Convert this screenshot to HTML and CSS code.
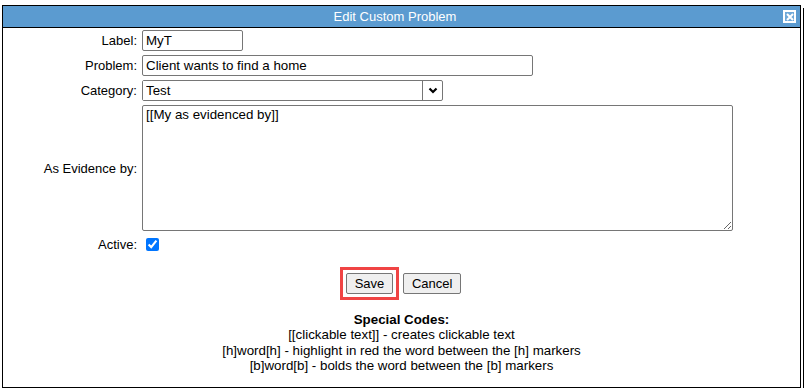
FILE: index.html
```html
<!DOCTYPE html>
<html lang="en">
<head>
    <meta charset="UTF-8">
    <title>Edit Custom Problem</title>
    <link rel="stylesheet" href="styles.css">
</head>
<body>
    <div class="dialog">
        <div class="titlebar">
            <span class="title">Edit Custom Problem</span>
            <span class="close">
                <svg width="8" height="8" viewBox="0 0 8 8"><path d="M1 1L7 7M7 1L1 7" stroke="#fff" stroke-width="2"/></svg>
            </span>
        </div>

        <form class="problem-form">
            <label for="label">Label:</label>
            <div><input type="text" id="label" class="w-label" value="MyT"></div>

            <label for="problem">Problem:</label>
            <div><input type="text" id="problem" class="w-problem" value="Client wants to find a home"></div>

            <label for="category">Category:</label>
            <div>
                <div class="select-box">
                    <select id="category"><option>Test</option></select>
                    <span class="arrow">
                        <svg width="10" height="7" viewBox="0 0 10 7"><path d="M1.5 1.5L5 5L8.5 1.5" fill="none" stroke="#000" stroke-width="2.2"/></svg>
                    </span>
                </div>
            </div>

            <label for="evidence">As Evidence by:</label>
            <div><textarea id="evidence">[[My as evidenced by]]</textarea></div>

            <label for="active">Active:</label>
            <div><input type="checkbox" id="active" checked></div>
        </form>

        <div class="actions">
            <span class="highlight"><button type="button">Save</button></span>
            <button type="button">Cancel</button>
        </div>

        <div class="codes">
            <strong>Special Codes:</strong><br>
            [[clickable text]] - creates clickable text<br>
            [h]word[h] - highlight in red the word between the [h] markers<br>
            [b]word[b] - bolds the word between the [b] markers
        </div>
    </div>
</body>
</html>
```

FILE: styles.css
```css
* {
    box-sizing: border-box;
}

body {
    margin: 0;
    padding: 5px 0 0 2px;
    background: #fff;
    font-family: "Liberation Sans", Arial, sans-serif;
    font-size: 13px;
    color: #000;
}

.dialog {
    width: 799px;
    height: 383px;
    border: 1px solid #000;
    background: #fff;
    box-shadow: 2px 2px 0 #fff, 3px 3px 0 #000;
}

.titlebar {
    display: flex;
    align-items: center;
    height: 22px;
    background: #5b9bd0;
    border-bottom: 1px solid #000;
    color: #fff;
}

.title {
    flex: 1;
    text-align: center;
    padding-left: 4px;
}

.close {
    display: flex;
    align-items: center;
    justify-content: center;
    width: 13px;
    height: 13px;
    margin-right: 4px;
    border: 2px solid #fff;
    background: #6fa9d9;
}

.problem-form {
    display: grid;
    grid-template-columns: 134px 1fr;
    column-gap: 5px;
    row-gap: 4px;
    margin-top: 2px;
}

.problem-form label {
    align-self: center;
    text-align: right;
}

.problem-form > div {
    display: flex;
}

input[type="text"],
textarea {
    height: 21px;
    padding: 1px 3px;
    border: 1px solid #767676;
    border-radius: 2px;
    font-family: inherit;
    font-size: 13.33px;
    color: #000;
}

.w-label {
    width: 101px;
}

.w-problem {
    width: 391px;
}

.select-box {
    display: flex;
    width: 301px;
    height: 21px;
    border: 1px solid #767676;
    border-radius: 2px;
}

.select-box select {
    flex: 1;
    appearance: none;
    border: none;
    border-right: 1px solid #767676;
    padding: 0 3px;
    background: #fff;
    font-family: inherit;
    font-size: 13.33px;
    color: #000;
}

.select-box .arrow {
    display: flex;
    align-items: center;
    justify-content: center;
    width: 19px;
}

textarea {
    width: 591px;
    height: 126px;
    resize: both;
}

input[type="checkbox"] {
    width: 13px;
    height: 13px;
    margin: 3px 3px 3px 4px;
}

.actions {
    margin-top: 13px;
    text-align: center;
    padding-right: 2px;
}

.highlight {
    display: inline-block;
    padding: 3px;
    border: 3px solid #f04444;
}

.actions button {
    height: 21px;
    padding: 1px 8px;
    border: 1px solid #767676;
    border-radius: 2px;
    background: #efefef;
    font-family: inherit;
    font-size: 13px;
    color: #000;
    vertical-align: middle;
}

.codes {
    margin-top: 12px;
    text-align: center;
    font-size: 13.33px;
    line-height: 15.3px;
}
```
